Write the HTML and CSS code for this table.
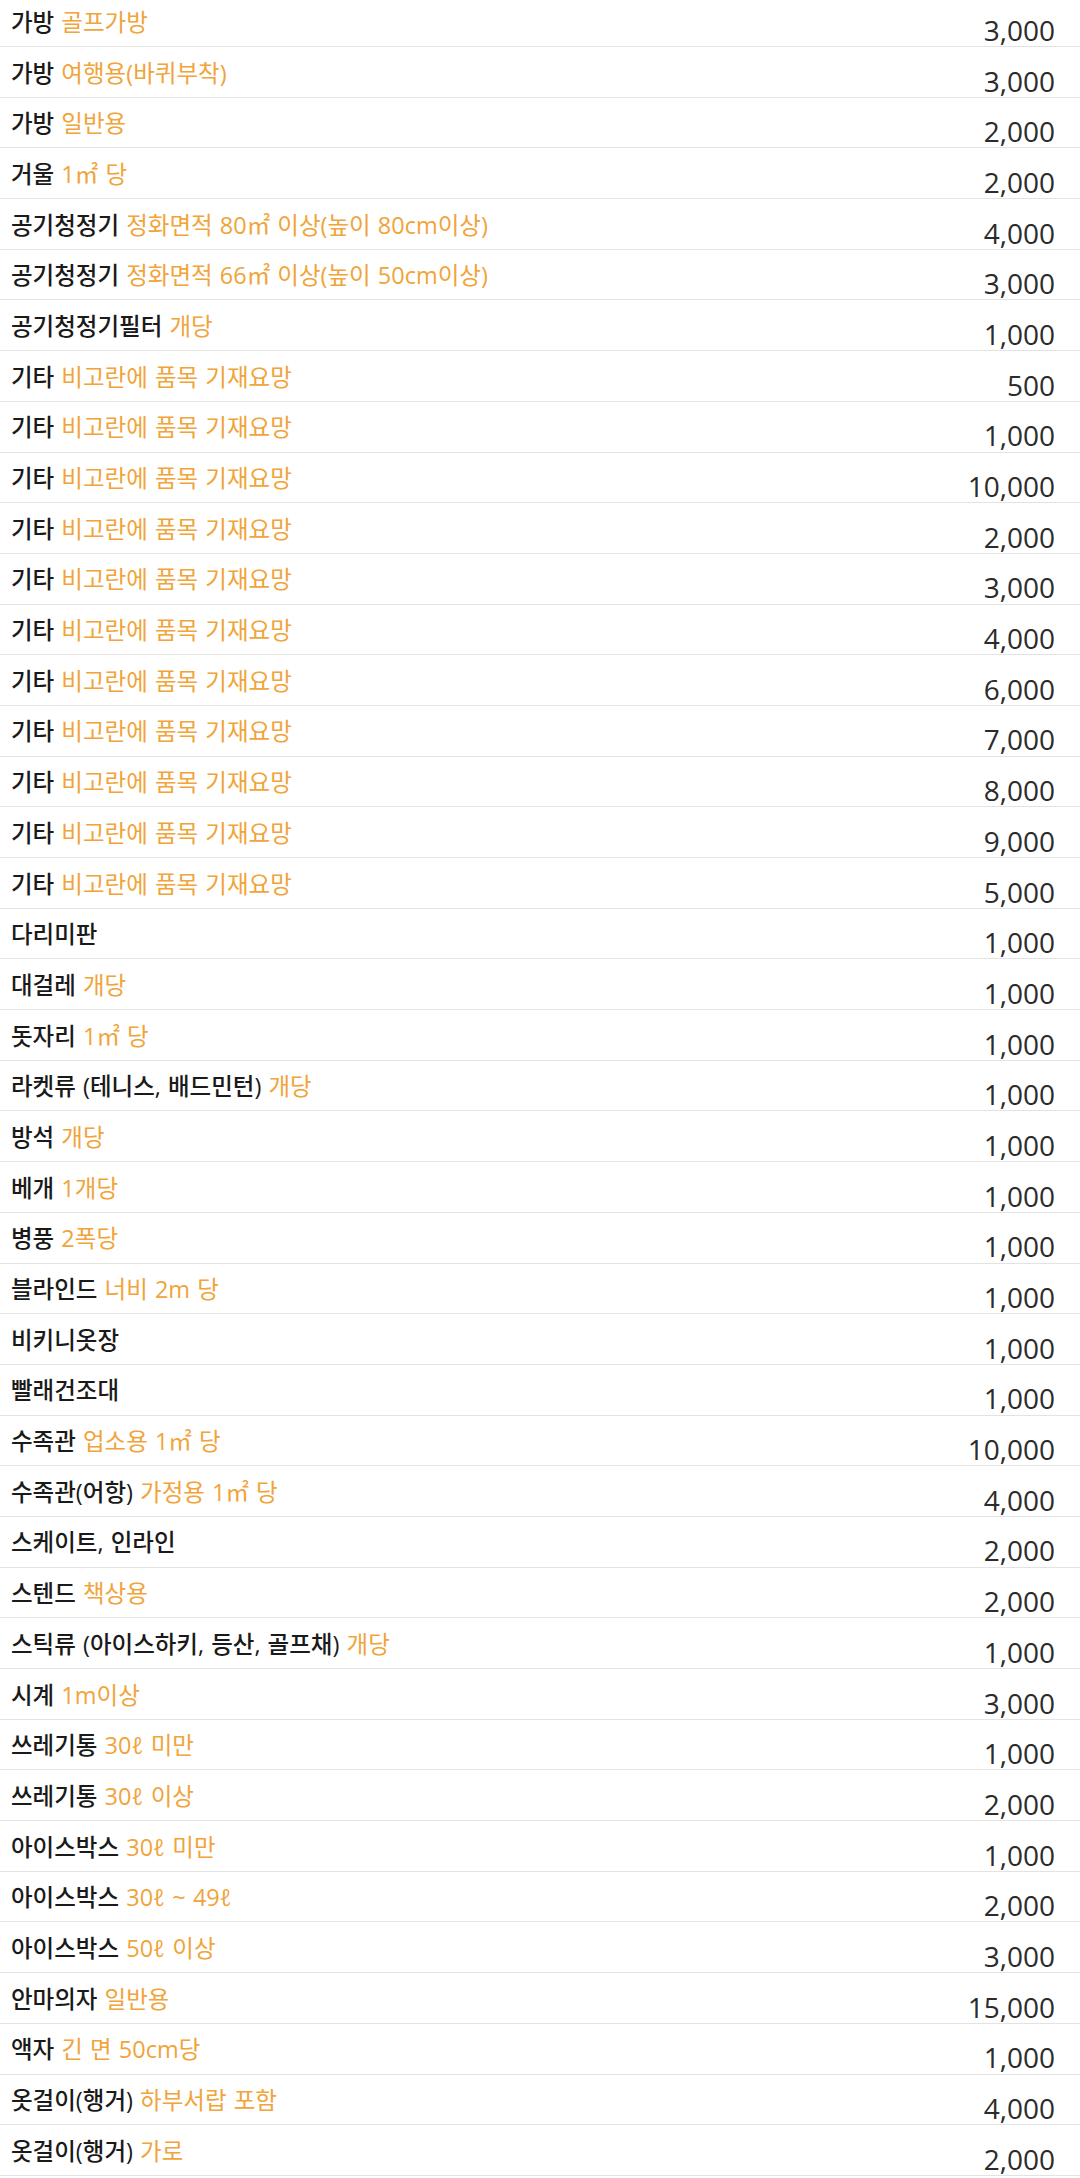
FILE: index.html
```html
<!DOCTYPE html>
<html lang="ko">
<head>
  <meta charset="UTF-8">
  <title>대형폐기물 수수료</title>
  <meta name="viewport" content="width=device-width, initial-scale=1.0">
  <link rel="stylesheet" href="styles.css">
</head>
<body>

  <ul class="fee-list">
    <li class="fee-row"><span class="name">가방 <em>골프가방</em></span><span class="price">3,000</span></li>
    <li class="fee-row"><span class="name">가방 <em>여행용(바퀴부착)</em></span><span class="price">3,000</span></li>
    <li class="fee-row"><span class="name">가방 <em>일반용</em></span><span class="price">2,000</span></li>
    <li class="fee-row"><span class="name">거울 <em>1㎡ 당</em></span><span class="price">2,000</span></li>
    <li class="fee-row"><span class="name">공기청정기 <em>정화면적 80㎡ 이상(높이 80cm이상)</em></span><span class="price">4,000</span></li>
    <li class="fee-row"><span class="name">공기청정기 <em>정화면적 66㎡ 이상(높이 50cm이상)</em></span><span class="price">3,000</span></li>
    <li class="fee-row"><span class="name">공기청정기필터 <em>개당</em></span><span class="price">1,000</span></li>
    <li class="fee-row"><span class="name">기타 <em>비고란에 품목 기재요망</em></span><span class="price">500</span></li>
    <li class="fee-row"><span class="name">기타 <em>비고란에 품목 기재요망</em></span><span class="price">1,000</span></li>
    <li class="fee-row"><span class="name">기타 <em>비고란에 품목 기재요망</em></span><span class="price">10,000</span></li>
    <li class="fee-row"><span class="name">기타 <em>비고란에 품목 기재요망</em></span><span class="price">2,000</span></li>
    <li class="fee-row"><span class="name">기타 <em>비고란에 품목 기재요망</em></span><span class="price">3,000</span></li>
    <li class="fee-row"><span class="name">기타 <em>비고란에 품목 기재요망</em></span><span class="price">4,000</span></li>
    <li class="fee-row"><span class="name">기타 <em>비고란에 품목 기재요망</em></span><span class="price">6,000</span></li>
    <li class="fee-row"><span class="name">기타 <em>비고란에 품목 기재요망</em></span><span class="price">7,000</span></li>
    <li class="fee-row"><span class="name">기타 <em>비고란에 품목 기재요망</em></span><span class="price">8,000</span></li>
    <li class="fee-row"><span class="name">기타 <em>비고란에 품목 기재요망</em></span><span class="price">9,000</span></li>
    <li class="fee-row"><span class="name">기타 <em>비고란에 품목 기재요망</em></span><span class="price">5,000</span></li>
    <li class="fee-row"><span class="name">다리미판</span><span class="price">1,000</span></li>
    <li class="fee-row"><span class="name">대걸레 <em>개당</em></span><span class="price">1,000</span></li>
    <li class="fee-row"><span class="name">돗자리 <em>1㎡ 당</em></span><span class="price">1,000</span></li>
    <li class="fee-row"><span class="name">라켓류 (테니스, 배드민턴) <em>개당</em></span><span class="price">1,000</span></li>
    <li class="fee-row"><span class="name">방석 <em>개당</em></span><span class="price">1,000</span></li>
    <li class="fee-row"><span class="name">베개 <em>1개당</em></span><span class="price">1,000</span></li>
    <li class="fee-row"><span class="name">병풍 <em>2폭당</em></span><span class="price">1,000</span></li>
    <li class="fee-row"><span class="name">블라인드 <em>너비 2m 당</em></span><span class="price">1,000</span></li>
    <li class="fee-row"><span class="name">비키니옷장</span><span class="price">1,000</span></li>
    <li class="fee-row"><span class="name">빨래건조대</span><span class="price">1,000</span></li>
    <li class="fee-row"><span class="name">수족관 <em>업소용 1㎡ 당</em></span><span class="price">10,000</span></li>
    <li class="fee-row"><span class="name">수족관(어항) <em>가정용 1㎡ 당</em></span><span class="price">4,000</span></li>
    <li class="fee-row"><span class="name">스케이트, 인라인</span><span class="price">2,000</span></li>
    <li class="fee-row"><span class="name">스텐드 <em>책상용</em></span><span class="price">2,000</span></li>
    <li class="fee-row"><span class="name">스틱류 (아이스하키, 등산, 골프채) <em>개당</em></span><span class="price">1,000</span></li>
    <li class="fee-row"><span class="name">시계 <em>1m이상</em></span><span class="price">3,000</span></li>
    <li class="fee-row"><span class="name">쓰레기통 <em>30ℓ 미만</em></span><span class="price">1,000</span></li>
    <li class="fee-row"><span class="name">쓰레기통 <em>30ℓ 이상</em></span><span class="price">2,000</span></li>
    <li class="fee-row"><span class="name">아이스박스 <em>30ℓ 미만</em></span><span class="price">1,000</span></li>
    <li class="fee-row"><span class="name">아이스박스 <em>30ℓ ~ 49ℓ</em></span><span class="price">2,000</span></li>
    <li class="fee-row"><span class="name">아이스박스 <em>50ℓ 이상</em></span><span class="price">3,000</span></li>
    <li class="fee-row"><span class="name">안마의자 <em>일반용</em></span><span class="price">15,000</span></li>
    <li class="fee-row"><span class="name">액자 <em>긴 면 50cm당</em></span><span class="price">1,000</span></li>
    <li class="fee-row"><span class="name">옷걸이(행거) <em>하부서랍 포함</em></span><span class="price">4,000</span></li>
    <li class="fee-row"><span class="name">옷걸이(행거) <em>가로</em></span><span class="price">2,000</span></li>
  </ul>

</body>
</html>
```

FILE: styles.css
```css
body {
  margin: 0;
  background-color: #ffffff;
  font-family: 'Open Sans', 'Noto Sans CJK KR', sans-serif;
  color: #1a1a1a;
  overflow: hidden;
}

.fee-list {
  list-style: none;
  margin: -3.7px 0 0 0;
  padding: 0;
}

.fee-row {
  display: flex;
  justify-content: space-between;
  align-items: flex-start;
  box-sizing: border-box;
  height: 50.7px;
  padding: 0 25px 0 11px;
  border-bottom: 1px solid #e3e3e3;
}

.name {
  font-size: 23.5px;
  font-weight: 500;
  line-height: 22px;
  word-spacing: 1px;
  padding-top: 14.5px;
  white-space: nowrap;
}

.name em {
  font-style: normal;
  font-weight: 400;
  color: #f0a43a;
}

.price {
  font-size: 28px;
  line-height: 28px;
  padding-top: 19.5px;
  color: #2b2b2b;
}
```
